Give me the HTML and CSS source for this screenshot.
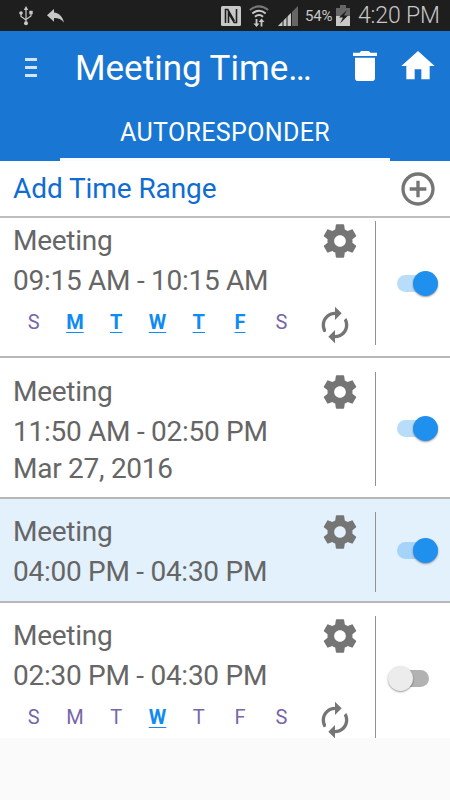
FILE: index.html
```html
<!DOCTYPE html>
<html lang="en">
<head>
<meta charset="utf-8">
<title>Meeting Times</title>
<link rel="stylesheet" href="styles.css">
</head>
<body>
<svg class="defs" width="0" height="0">
  <symbol id="gear" viewBox="0 0 24 24"><path d="M19.43 12.98c.04-.32.07-.64.07-.98s-.03-.66-.07-.98l2.11-1.65c.19-.15.24-.42.12-.64l-2-3.46c-.12-.22-.39-.3-.61-.22l-2.49 1c-.52-.4-1.08-.73-1.69-.98l-.38-2.65C14.46 2.18 14.25 2 14 2h-4c-.25 0-.46.18-.49.42l-.38 2.65c-.61.25-1.17.59-1.69.98l-2.49-1c-.23-.09-.49 0-.61.22l-2 3.46c-.13.22-.07.49.12.64l2.11 1.65c-.04.32-.07.65-.07.98s.03.66.07.98l-2.11 1.65c-.19.15-.24.42-.12.64l2 3.46c.12.22.39.3.61.22l2.49-1c.52.4 1.08.73 1.69.98l.38 2.65c.03.24.24.42.49.42h4c.25 0 .46-.18.49-.42l.38-2.65c.61-.25 1.17-.59 1.69-.98l2.49 1c.23.09.49 0 .61-.22l2-3.46c.12-.22.07-.49-.12-.64l-2.11-1.65zM12 15.5c-1.93 0-3.5-1.57-3.5-3.5s1.57-3.5 3.5-3.5 3.5 1.57 3.5 3.5-1.57 3.5-3.5 3.5z"/></symbol>
  <symbol id="loop" viewBox="0 0 24 24"><path d="M12 4V1l4 4-4 4V6c-3.31 0-6 2.69-6 6 0 1.01.25 1.97.7 2.8l-.3 1.2-1.3.3C4.46 15.03 4 13.57 4 12c0-4.42 3.58-8 8-8zm6.76 3.74L17.3 9.2c.44.84.7 1.79.7 2.8 0 3.31-2.69 6-6 6v-3l-4 4 4 4v-3c4.42 0 8-3.58 8-8 0-1.57-.46-3.03-1.24-4.26z"/></symbol>
</svg>

<header class="status">
  <svg class="usb" viewBox="0 0 14 20"><path d="M7 3v14M2 7v3.5L7 14M12 6v4l-5 3.4" fill="none" stroke="currentColor" stroke-width="1.2"/><path d="M7 0l2.2 4H4.8z"/><circle cx="2" cy="7" r="1.8"/><path d="M10.3 4.8h3.4v3.4h-3.4z"/><circle cx="7" cy="17.3" r="2"/></svg>
  <svg class="reply" viewBox="0 0 17 14"><path d="M7 0v3.5c5 .6 8.500 4 10 10C14.500 10.200 11.500 9 7 9v3.700L0 6.200z"/></svg>
  <span class="spacer"></span>
  <svg class="nfc" viewBox="0 0 20 20"><rect width="20" height="20" rx="1.500"/><path d="M4.500 17V3.500h2.300l6.500 11.500M15.500 3v13.500h-2.300L7.500 7v10" fill="none" stroke="#1e1e1e" stroke-width="1.600"/></svg>
  <svg class="wifi" viewBox="0 0 20 22"><g fill="none" stroke="currentColor" stroke-width="2"><path d="M.8 5Q10-2.300 19.200 5" stroke="#777"/><path d="M3.300 8.500Q10 3 16.700 8.500M6 11.700Q10 8.200 14 11.700"/></g><path d="M7.500 22l-3-3.500h2.100V14h1.800v4.500h2zM12.500 13.500l3 3.500h-2.100v4.500h-1.800V17h-2z"/></svg>
  <svg class="signal" viewBox="0 0 20 20"><path d="M0 20L20 0v20z" fill="#666"/><path d="M0 20L13 7v13z"/><path d="M5 13v7M9 10v10M13.500 5v15" stroke="#1e1e1e"/></svg>
  <span class="percent">54%</span>
  <svg class="battery" viewBox="0 0 14 21"><path d="M4 0h6v3h4v8H0V3h4z" fill="#666"/><path d="M0 11h14v10H0z"/><path d="M11 5L3 12.500H7L4 18.500l8-8H8z" fill="#1e1e1e"/></svg>
  <span class="clock">4:20 PM</span>
</header>

<div class="appbar">
  <div class="toolbar">
    <div class="menu"><i></i><i></i><i></i></div>
    <h1 class="title">Meeting Time…</h1>
    <svg class="icon" viewBox="0 0 24 24"><path d="M6 19.300c0 1 .8 1.700 1.700 1.700h8.600c.9 0 1.700-.7 1.700-1.700V7H6zM19.200 4h-4l-.8-1H9.600l-.8 1h-4v2h14.400z"/></svg>
    <svg class="icon home" viewBox="0 0 24 24"><path d="M10 20v-6h4v6h5v-8h3L12 3 2 12h3v8z"/></svg>
  </div>
  <div class="tabs"><div class="tab">AUTORESPONDER</div></div>
</div>

<div class="add">
  <span class="add-label">Add Time Range</span>
  <svg class="icon gray" viewBox="0 0 24 24"><path d="M13 7h-2v4H7v2h4v4h2v-4h4v-2h-4V7zm-1-5C6.480 2 2 6.480 2 12s4.480 10 10 10 10-4.480 10-10S17.520 2 12 2zm0 18c-4.410 0-8-3.590-8-8s3.590-8 8-8 8 3.590 8 8-3.590 8-8 8z"/></svg>
</div>

<main class="list">
  <section class="row first">
    <div class="info">
      <div class="line name">Meeting</div>
      <div class="line">09:15 AM - 10:15 AM</div>
      <div class="days"><span>S</span><span class="on">M</span><span class="on">T</span><span class="on">W</span><span class="on">T</span><span class="on">F</span><span>S</span></div>
    </div>
    <div class="actions"><svg class="icon"><use href="#gear"/></svg><svg class="icon repeat"><use href="#loop"/></svg></div>
    <div class="toggle"><div class="switch checked"></div></div>
  </section>
  <section class="row second">
    <div class="info">
      <div class="line name">Meeting</div>
      <div class="line">11:50 AM - 02:50 PM</div>
      <div class="line date">Mar 27, 2016</div>
    </div>
    <div class="actions"><svg class="icon"><use href="#gear"/></svg></div>
    <div class="toggle"><div class="switch checked"></div></div>
  </section>
  <section class="row third">
    <div class="info">
      <div class="line name">Meeting</div>
      <div class="line">04:00 PM - 04:30 PM</div>
    </div>
    <div class="actions"><svg class="icon"><use href="#gear"/></svg></div>
    <div class="toggle"><div class="switch checked"></div></div>
  </section>
  <section class="row fourth">
    <div class="info">
      <div class="line name">Meeting</div>
      <div class="line">02:30 PM - 04:30 PM</div>
      <div class="days"><span>S</span><span>M</span><span>T</span><span class="on">W</span><span>T</span><span>F</span><span>S</span></div>
    </div>
    <div class="actions"><svg class="icon"><use href="#gear"/></svg><svg class="icon repeat"><use href="#loop"/></svg></div>
    <div class="toggle"><div class="switch"></div></div>
  </section>
</main>
</body>
</html>
```
FILE: styles.css
```css
* { box-sizing: border-box; }
body { margin: 0; height: 800px; overflow: hidden; background: #fafafa; font-family: Roboto, "Liberation Sans", sans-serif; }
svg { fill: currentColor; flex: none; display: block; }
.defs { position: absolute; }
.icon { width: 40px; height: 40px; }
.spacer { flex: 1; }

.status { height: 31px; background: #1e1e1e; color: #c8c8c8; display: flex; align-items: center; padding: 0 11px 0 19px; white-space: nowrap; }
.usb { width: 14px; height: 20px; }
.reply { width: 17px; height: 14px; margin-left: 14px; }
.nfc { width: 20px; height: 20px; }
.wifi { width: 20px; height: 22px; margin-left: 8px; }
.signal { width: 20px; height: 20px; margin-left: 9px; }
.percent { width: 27px; margin-left: 7px; font-size: 15px; letter-spacing: -0.2px; }
.battery { width: 14px; height: 21px; margin-left: 4px; }
.clock { width: 81px; margin-left: 8px; font-size: 23px; font-weight: 300; line-height: 31px; letter-spacing: -0.15px; }

.appbar { height: 130px; background: #1976d2; color: #fff; }
.toolbar { height: 74px; display: flex; align-items: center; padding: 0 12px 4px 25px; }
.menu { width: 12px; display: grid; gap: 5px; margin-top: 2px; }
.menu i { height: 3px; background: #d3e4f7; }
.title { margin: 4px 0 0 38px; width: 270px; font-size: 35px; font-weight: 400; line-height: 41px; white-space: nowrap; }
.home { margin-left: 12.5px; }
.tabs { height: 56px; display: flex; justify-content: center; }
.tab { width: 330px; border-bottom: 3px solid #f5fbff; font-size: 25px; line-height: 56px; letter-spacing: 0.35px; text-align: center; white-space: nowrap; }

.add { height: 57px; background: #fff; border-bottom: 2px solid #bebebe; display: flex; justify-content: space-between; align-items: center; padding: 0 12.5px 0 13px; color: #0f6cd3; }
.add-label { font-size: 28px; letter-spacing: -0.08px; white-space: nowrap; }
.gray { color: #757575; }

.list { height: 520px; overflow: hidden; }
.row { display: grid; grid-template-columns: 307px 68px 75px; background: #fff; border-bottom: 2px solid #b8b8b8; }
.first { height: 140px; padding: 3px 0 12px; }
.second { height: 141px; padding: 14px 0 13px; }
.third { height: 104px; padding: 13px 0 12px; background: #e3f1fd; }
.fourth { height: 135px; padding-top: 13px; border: 0; overflow: hidden; }
.info { padding-left: 13px; color: #666; }
.line { height: 40px; font-size: 28px; line-height: 40px; letter-spacing: -0.27px; white-space: nowrap; }
.date { height: 34px; line-height: 34px; }
.days { width: 289px; margin-top: 4px; display: grid; grid-template-columns: repeat(7, 1fr); text-align: center; font-size: 20px; line-height: 34px; color: #7766a8; }
.days .on { color: #0f8bf2; font-weight: 700; text-decoration: underline; text-underline-offset: 3px; text-decoration-thickness: 1px; }
.actions { padding-left: 13px; color: #757575; }
.repeat { margin: 44px 0 0 -5px; }
.toggle { border-left: 1px solid #919191; display: flex; align-items: center; padding-left: 12px; }
.switch { position: relative; width: 41px; height: 25px; display: flex; align-items: center; }
.switch::before { content: ""; width: 32px; height: 17px; margin-left: 9px; border-radius: 9px; background: #b2b2b2; }
.switch::after { content: ""; position: absolute; left: 0; top: 0; width: 25px; height: 25px; border-radius: 50%; background: #ececec; box-shadow: 0 1px 2px rgba(0,0,0,.4); }
.checked { margin-left: 9px; }
.second .switch { margin-bottom: 2px; }
.third .switch { margin-bottom: 4px; }
.checked::before { margin-left: 0; background: rgba(33,150,243,.32); }
.checked::after { left: 16px; background: #2090ee; }
```
